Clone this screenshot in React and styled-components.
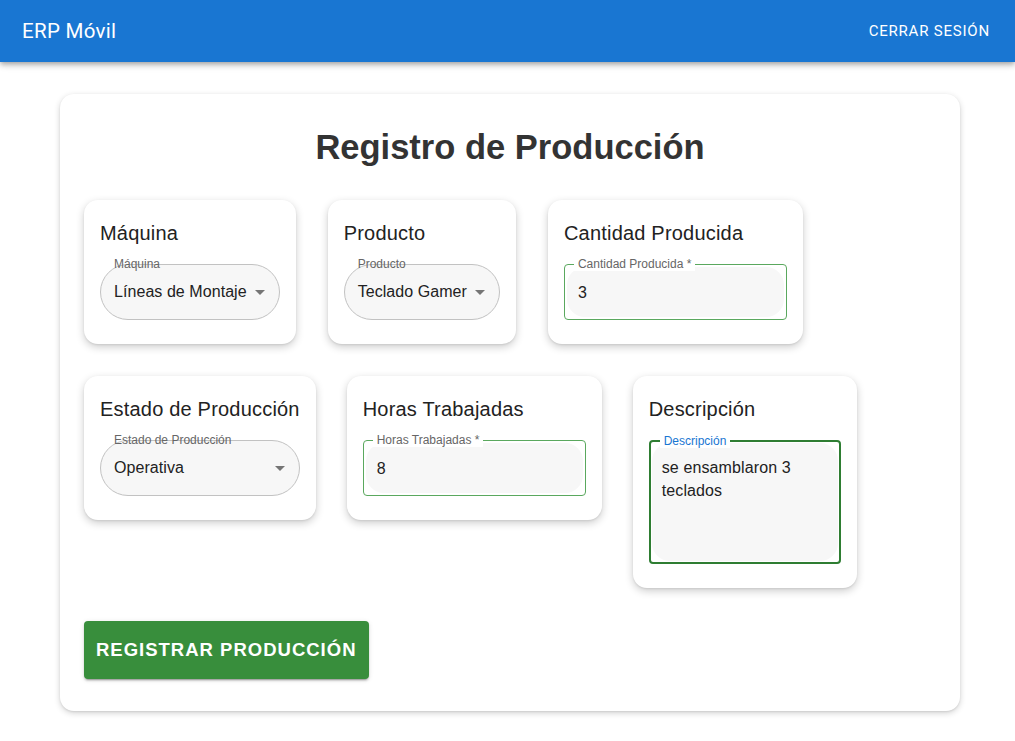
import React from 'react';
import styled, {createGlobalStyle} from 'styled-components';

const SANS = `Arial, "Liberation Sans", Helvetica, sans-serif`;

const GlobalStyle = createGlobalStyle`
  * { box-sizing: border-box; }
  body {
    margin: 0;
    background: #fff;
    font-family: ${SANS};
    color: #222;
  }
`;

const AppBar = styled.header`
  height: 62px;
  background: #1976d2;
  color: #fff;
  display: flex;
  align-items: center;
  justify-content: space-between;
  padding: 0 25px 0 22px;
  box-shadow: 0 2px 4px -1px rgba(0,0,0,.2), 0 4px 5px 0 rgba(0,0,0,.14), 0 1px 10px 0 rgba(0,0,0,.12);
  font-family: Roboto, ${SANS};
`;

const Brand = styled.div`
  font-size: 20.5px;
  font-weight: 400;
  letter-spacing: 0.3px;
`;

const LogoutButton = styled.button`
  background: none;
  border: 0;
  color: #fff;
  font-family: Roboto, ${SANS};
  font-size: 15px;
  font-weight: 400;
  letter-spacing: 0.8px;
  text-transform: uppercase;
  padding: 6px 0;
  cursor: pointer;
`;

const Page = styled.main`
  padding: 32px 0 30px;
`;

const Panel = styled.section`
  width: 900px;
  margin: 0 0 0 60px;
  background: #fff;
  border-radius: 14px;
  padding: 24px 24px 32px;
  box-shadow: 0 2px 6px rgba(0,0,0,.18), 0 1px 2px rgba(0,0,0,.08);
`;

const Title = styled.h1`
  margin: 10px 0 34px;
  text-align: center;
  font-size: 34.5px;
  line-height: 38px;
  font-weight: 700;
  color: #333;
`;

const Row = styled.div`
  display: flex;
  align-items: flex-start;
  gap: ${p => p.$gap || 32}px;
  margin-bottom: ${p => p.$bottom || 32}px;
`;

const Card = styled.div`
  display: flex;
  flex-direction: column;
  align-items: stretch;
  background: #fff;
  border-radius: 14px;
  padding: 21px 16px 24px;
  box-shadow: 0 3px 8px rgba(0,0,0,.2), 0 1px 2px rgba(0,0,0,.08);
`;

const CardTitle = styled.h3`
  margin: 0 0 19px;
  font-size: 20px;
  line-height: 24px;
  font-weight: 400;
  letter-spacing: 0.2px;
  color: #222;
  white-space: nowrap;
`;

const SelectBox = styled.div`
  position: relative;
  height: 56px;
  border: 1px solid #c2c2c2;
  border-radius: 28px;
  background: #f7f7f7;
  display: flex;
  align-items: center;
  padding: 0 32px 0 13px;
  font-size: 16px;
  letter-spacing: 0.06px;
  color: #222;
  white-space: nowrap;
`;

const FloatLabel = styled.span`
  position: absolute;
  top: -8px;
  left: ${p => p.$left || 13}px;
  font-size: 12px;
  line-height: 14px;
  letter-spacing: 0;
  color: ${p => p.$color || '#666'};
  padding: ${p => (p.$notch ? '0 4px' : '0')};
  background: ${p => (p.$notch ? '#fff' : 'transparent')};
  white-space: nowrap;
`;

const Arrow = styled.span`
  position: absolute;
  right: 14px;
  top: 50%;
  margin-top: -2px;
  width: 0;
  height: 0;
  border-left: 5px solid transparent;
  border-right: 5px solid transparent;
  border-top: 5px solid #757575;
`;

const FieldBox = styled.div`
  position: relative;
  width: ${p => p.$width}px;
  height: ${p => p.$height}px;
  border: ${p => (p.$focused ? '2px solid #2e7d32' : '1px solid #5aa85e')};
  border-radius: 4px;
  padding: ${p => (p.$focused ? '1px' : '2px')};
`;

const FieldInner = styled.div`
  height: 100%;
  background: #f7f7f7;
  border-radius: 18px;
  padding: ${p => (p.$multi ? '13px 10px' : '0 11px')};
  display: flex;
  align-items: ${p => (p.$multi ? 'flex-start' : 'center')};
  font-size: 16px;
  line-height: 23px;
  letter-spacing: 0.12px;
  color: #222;
`;

const SubmitButton = styled.button`
  height: 58px;
  padding: 0 12px;
  border: 0;
  border-radius: 4px;
  background: #388e3c;
  color: #fff;
  font-family: ${SANS};
  font-size: 18.5px;
  font-weight: 700;
  letter-spacing: 1px;
  text-transform: uppercase;
  box-shadow: 0 3px 1px -2px rgba(0,0,0,.2), 0 2px 2px 0 rgba(0,0,0,.14), 0 1px 5px 0 rgba(0,0,0,.12);
  cursor: pointer;
`;

const Select = ({label, value}) => (
  <SelectBox>
    <FloatLabel>{label}</FloatLabel>
    {value}
    <Arrow />
  </SelectBox>
);

const TextField = ({label, value, width, height = 56, focused, multi}) => (
  <FieldBox $width={width} $height={height} $focused={focused}>
    <FloatLabel $notch $left={9} $color={focused ? '#1976d2' : '#666'}>{label}</FloatLabel>
    <FieldInner $multi={multi}>{value}</FieldInner>
  </FieldBox>
);

export default function App() {
  return (
    <>
      <GlobalStyle />
      <AppBar>
        <Brand>ERP Móvil</Brand>
        <LogoutButton>Cerrar sesión</LogoutButton>
      </AppBar>
      <Page>
        <Panel>
          <Title>Registro de Producción</Title>
          <Row>
            <Card>
              <CardTitle>Máquina</CardTitle>
              <Select label="Máquina" value="Líneas de Montaje" />
            </Card>
            <Card>
              <CardTitle>Producto</CardTitle>
              <Select label="Producto" value="Teclado Gamer" />
            </Card>
            <Card>
              <CardTitle>Cantidad Producida</CardTitle>
              <TextField label="Cantidad Producida *" value="3" width={223} />
            </Card>
          </Row>
          <Row $gap={31} $bottom={33}>
            <Card>
              <CardTitle>Estado de Producción</CardTitle>
              <Select label="Estado de Producción" value="Operativa" />
            </Card>
            <Card>
              <CardTitle>Horas Trabajadas</CardTitle>
              <TextField label="Horas Trabajadas *" value="8" width={223} />
            </Card>
            <Card>
              <CardTitle>Descripción</CardTitle>
              <TextField label="Descripción" value="se ensamblaron 3 teclados" width={192} height={124} focused multi />
            </Card>
          </Row>
          <SubmitButton>Registrar producción</SubmitButton>
        </Panel>
      </Page>
    </>
  );
}
